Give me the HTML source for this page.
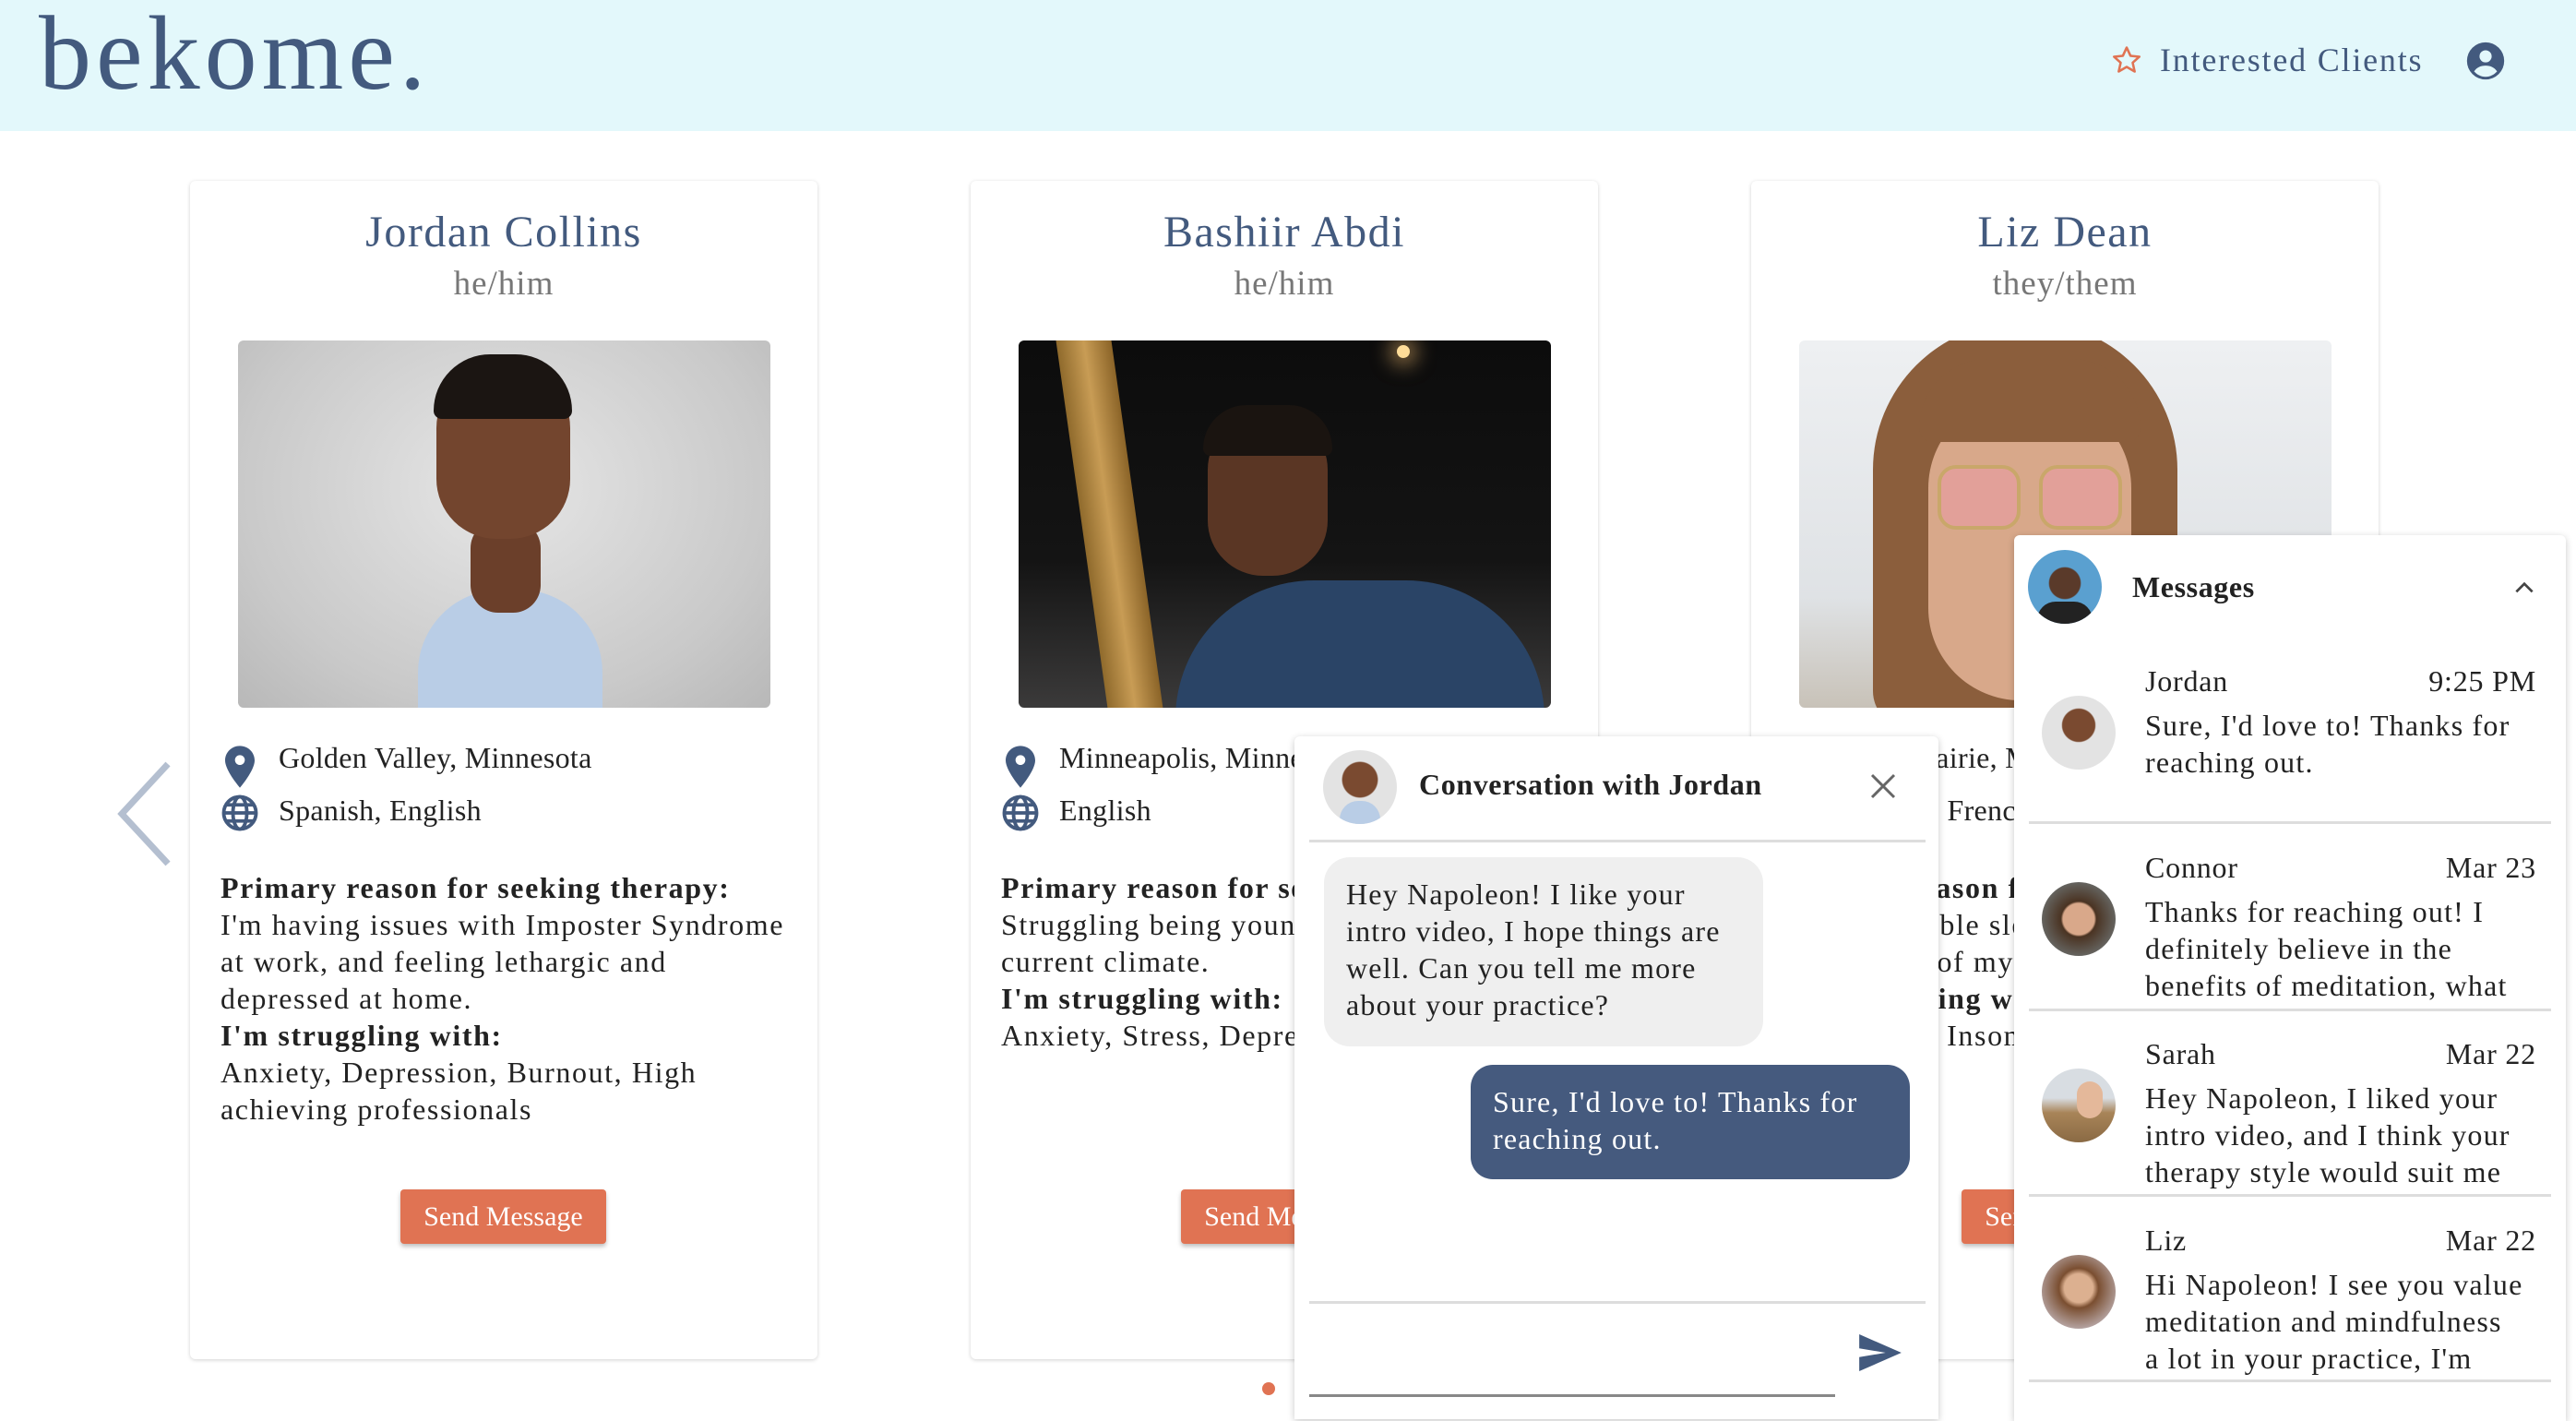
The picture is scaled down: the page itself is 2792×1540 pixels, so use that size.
<!DOCTYPE html>
<html><head><meta charset="utf-8"><style>
*{margin:0;padding:0;box-sizing:border-box}
body{width:2792px;height:1520px;overflow:hidden;background:#fff;font-family:"Liberation Serif",serif;color:#222;position:relative}
.abs{position:absolute}
.hdr{left:0;top:0;width:2792px;height:142px;background:#e3f8fb}
.logo{left:42px;top:-8px;font-size:114px;color:#435a7e;letter-spacing:5px}
.card{width:680px;height:1277px;top:196px;background:#fff;border-radius:6px;box-shadow:0 1px 4px rgba(0,0,0,.18)}
.name{width:100%;text-align:center;top:28px;font-size:48px;letter-spacing:1.5px;color:#435a7e}
.pro{width:100%;text-align:center;top:90px;font-size:37px;letter-spacing:1px;color:#777}
.photo{left:52px;top:173px;width:577px;height:398px;border-radius:6px;overflow:hidden}
.row{left:96px;font-size:32px;color:#222;white-space:nowrap;letter-spacing:.3px}
.txt{left:33px;top:746px;font-size:32px;line-height:40px;white-space:nowrap;letter-spacing:1.6px}
.btn{top:1093px;width:223px;height:59px;background:#e07353;color:#fff;font-size:30px;text-align:center;line-height:59px;border-radius:4px;box-shadow:0 3px 5px rgba(0,0,0,.25)}
.panel{background:#fff;box-shadow:0 2px 8px rgba(0,0,0,.22);border-radius:6px 6px 0 0}
.av{border-radius:50%;overflow:hidden}
.item .nm{font-size:32px;color:#222;letter-spacing:.8px}
.item .msg{font-size:32px;line-height:40px;color:#222;height:88px;overflow:hidden;letter-spacing:1.2px;white-space:nowrap}
.div{height:3px;background:#ddd}
</style></head><body>
<div class="abs hdr"></div>
<div class="abs logo">bekome.</div>
<svg class="abs" style="left:2288px;top:48px" width="34" height="34" viewBox="0 0 24 24"><path d="M12 2.5l2.9 6.3 6.8.7-5.1 4.6 1.5 6.7L12 17.3l-6.1 3.5 1.5-6.7L2.3 9.5l6.8-.7z" fill="none" stroke="#e07353" stroke-width="1.8" stroke-linejoin="round"/></svg>
<div class="abs" style="left:2341px;top:44px;font-size:36px;color:#435a7e;letter-spacing:1.8px">Interested Clients</div>
<svg class="abs" style="left:2672px;top:44px" width="44" height="44" viewBox="0 0 24 24"><circle cx="12" cy="12" r="11" fill="#435a7e"/><circle cx="12" cy="9.3" r="3.6" fill="#e3f8fb"/><path d="M5.2 18.2c1.6-2.4 4-3.4 6.8-3.4s5.2 1 6.8 3.4c-1.8 2-4.2 3.2-6.8 3.2s-5-1.2-6.8-3.2z" fill="#e3f8fb"/></svg>

<svg class="abs" style="left:122px;top:822px" width="70" height="120" viewBox="0 0 70 120"><path d="M60 6L10 60l50 54" fill="none" stroke="#b4bfd0" stroke-width="7"/></svg>

<!-- card 1 -->
<div class="abs card" style="left:206px">
 <div class="abs name">Jordan Collins</div>
 <div class="abs pro">he/him</div>
 <div class="abs photo" style="background:radial-gradient(ellipse at 50% 40%,#e6e6e6,#c9c9c9 70%,#b8b8b8)">
  <div class="abs" style="left:195px;top:270px;width:200px;height:160px;border-radius:90px 90px 0 0;background:#b9cde6"></div>
  <div class="abs" style="left:252px;top:195px;width:76px;height:100px;background:#6b3f2a;border-radius:30px"></div>
  <div class="abs" style="left:215px;top:25px;width:145px;height:190px;border-radius:70px 70px 65px 65px;background:#73452e"></div>
  <div class="abs" style="left:212px;top:15px;width:150px;height:70px;border-radius:70px 70px 10px 10px;background:#1b1512"></div>
 </div>
 <svg class="abs" style="left:38px;top:612px" width="32" height="46" viewBox="0 0 24 34"><path d="M12 0C5.4 0 0 5.2 0 11.8 0 20 12 34 12 34s12-14 12-22.2C24 5.2 18.6 0 12 0zm0 15.5a4 4 0 110-8 4 4 0 010 8z" fill="#435a7e"/></svg>
 <div class="abs row" style="top:607px">Golden Valley, Minnesota</div>
 <svg class="abs" style="left:33px;top:664px" width="42" height="42" viewBox="0 0 24 24"><circle cx="12" cy="12" r="10" fill="none" stroke="#435a7e" stroke-width="2.2"/><ellipse cx="12" cy="12" rx="4.3" ry="10" fill="none" stroke="#435a7e" stroke-width="2.2"/><path d="M2 12h20M3.5 7h17M3.5 17h17" stroke="#435a7e" stroke-width="2.2"/></svg>
 <div class="abs row" style="top:664px">Spanish, English</div>
 <div class="abs txt"><b>Primary reason for seeking therapy:</b><br>I'm having issues with Imposter Syndrome<br>at work, and feeling lethargic and<br>depressed at home.<br><b>I'm struggling with:</b><br>Anxiety, Depression, Burnout, High<br>achieving professionals</div>
 <div class="abs btn" style="left:228px">Send Message</div>
</div>

<!-- card 2 -->
<div class="abs card" style="left:1052px">
 <div class="abs name">Bashiir Abdi</div>
 <div class="abs pro">he/him</div>
 <div class="abs photo" style="background:linear-gradient(180deg,#0c0c0c,#141414 60%,#3b3a3a)">
  <div class="abs" style="left:70px;top:0;width:60px;height:420px;background:linear-gradient(90deg,#8f6a2c,#c89c55,#8b6428);transform:skewX(8deg)"></div>
  <div class="abs" style="left:410px;top:5px;width:14px;height:14px;border-radius:50%;background:#ffdd99;box-shadow:0 0 20px 8px rgba(255,200,120,.5)"></div>
  <div class="abs" style="left:170px;top:260px;width:400px;height:200px;border-radius:150px 150px 0 0;background:#2a4466"></div>
  <div class="abs" style="left:205px;top:80px;width:130px;height:175px;border-radius:60px;background:#5a3624"></div>
  <div class="abs" style="left:200px;top:70px;width:140px;height:55px;border-radius:60px 60px 10px 10px;background:#1a1410"></div>
 </div>
 <svg class="abs" style="left:38px;top:612px" width="32" height="46" viewBox="0 0 24 34"><path d="M12 0C5.4 0 0 5.2 0 11.8 0 20 12 34 12 34s12-14 12-22.2C24 5.2 18.6 0 12 0zm0 15.5a4 4 0 110-8 4 4 0 010 8z" fill="#435a7e"/></svg>
 <div class="abs row" style="top:607px">Minneapolis, Minnesota</div>
 <svg class="abs" style="left:33px;top:664px" width="42" height="42" viewBox="0 0 24 24"><circle cx="12" cy="12" r="10" fill="none" stroke="#435a7e" stroke-width="2.2"/><ellipse cx="12" cy="12" rx="4.3" ry="10" fill="none" stroke="#435a7e" stroke-width="2.2"/><path d="M2 12h20M3.5 7h17M3.5 17h17" stroke="#435a7e" stroke-width="2.2"/></svg>
 <div class="abs row" style="top:664px">English</div>
 <div class="abs txt"><b>Primary reason for seeking therapy:</b><br>Struggling being young in the<br>current climate.<br><b>I'm struggling with:</b><br>Anxiety, Stress, Depression</div>
 <div class="abs btn" style="left:228px">Send Message</div>
</div>

<!-- card 3 -->
<div class="abs card" style="left:1898px">
 <div class="abs name">Liz Dean</div>
 <div class="abs pro">they/them</div>
 <div class="abs photo" style="background:linear-gradient(180deg,#eef0f2,#dfe2e5 70%,#c8c2b8)">
  <div class="abs" style="left:80px;top:-20px;width:330px;height:440px;border-radius:160px 160px 40px 40px;background:#8b5e3c"></div>
  <div class="abs" style="left:140px;top:60px;width:220px;height:330px;border-radius:100px;background:#d8a88a"></div>
  <div class="abs" style="left:130px;top:20px;width:240px;height:90px;border-radius:100px 100px 20px 20px;background:#8b5e3c"></div>
  <div class="abs" style="left:150px;top:135px;width:90px;height:70px;border-radius:20px;border:4px solid #c9a76a;background:rgba(240,150,170,.45)"></div>
  <div class="abs" style="left:260px;top:135px;width:90px;height:70px;border-radius:20px;border:4px solid #c9a76a;background:rgba(240,150,170,.45)"></div>
 </div>
 <div class="abs row" style="top:607px">Eden Prairie, Minnesota</div>
 <div class="abs row" style="top:664px">English, French</div>
 <div class="abs txt"><b>Primary reason for seeking therapy:</b><br>Having trouble sleeping and<br>taking care of myself.<br><b>I'm struggling with:</b><br>Depression, Insomnia</div>
 <div class="abs btn" style="left:228px">Send Message</div>
</div>

<div class="abs" style="left:1368px;top:1498px;width:14px;height:14px;border-radius:50%;background:#e07353"></div>

<!-- conversation panel -->
<div class="abs panel" style="left:1403px;top:798px;width:698px;height:740px">
 <div class="abs av" style="left:31px;top:15px;width:80px;height:80px;background:radial-gradient(circle at 50% 40%,#7a4a30 30%,#e3e3e3 32%)"><div class="abs" style="left:18px;top:55px;width:44px;height:30px;border-radius:20px 20px 0 0;background:#b9cde6"></div></div>
 <div class="abs" style="left:135px;top:34px;font-size:32px;font-weight:bold;color:#222;letter-spacing:.6px">Conversation with Jordan</div>
 <svg class="abs" style="left:622px;top:38px" width="32" height="32" viewBox="0 0 24 24"><path d="M3 3l18 18M21 3L3 21" stroke="#666" stroke-width="2.2"/></svg>
 <div class="abs div" style="left:16px;top:112px;width:668px"></div>
 <div class="abs" style="left:32px;top:131px;width:476px;height:205px;background:#efefef;border-radius:28px;padding:20px 24px;font-size:32px;line-height:40px;letter-spacing:1.2px;white-space:nowrap">Hey Napoleon! I like your<br>intro video, I hope things are<br>well. Can you tell me more<br>about your practice?</div>
 <div class="abs" style="left:191px;top:356px;width:476px;height:124px;background:#455a7e;color:#fff;border-radius:24px;padding:20px 24px;font-size:32px;line-height:40px;letter-spacing:1.2px;white-space:nowrap">Sure, I'd love to! Thanks for<br>reaching out.</div>
 <div class="abs div" style="left:16px;top:612px;width:668px"></div>
 <svg class="abs" style="left:612px;top:648px" width="46" height="40" viewBox="0 0 24 21"><path d="M0 0l24 10.5L0 21l0-8 15-2.5L0 8z" fill="#435a7e"/></svg>
 <div class="abs" style="left:16px;top:713px;width:570px;height:3px;background:#888"></div>
</div>

<!-- messages panel -->
<div class="abs panel" style="left:2183px;top:580px;width:598px;height:960px">
 <div class="abs av" style="left:15px;top:16px;width:80px;height:80px;background:radial-gradient(circle at 50% 45%,#5a3a2a 28%,#5aa0d0 30%)"><div class="abs" style="left:10px;top:56px;width:60px;height:30px;border-radius:20px 20px 0 0;background:#222"></div></div>
 <div class="abs" style="left:128px;top:38px;font-size:32px;font-weight:bold;letter-spacing:.6px">Messages</div>
 <svg class="abs" style="left:540px;top:44px" width="26" height="26" viewBox="0 0 24 24"><path d="M4 16l8-8 8 8" fill="none" stroke="#444" stroke-width="2.5"/></svg>

 <div class="abs item" style="left:0;top:140px;width:598px">
  <div class="abs av" style="left:30px;top:34px;width:80px;height:80px;background:radial-gradient(circle at 50% 40%,#7a4a30 28%,#e3e3e3 30%)"></div>
  <div class="abs nm" style="left:142px;top:0">Jordan</div><div class="abs nm" style="right:32px;top:0">9:25 PM</div>
  <div class="abs msg" style="left:142px;top:46px;width:440px">Sure, I'd love to! Thanks for<br>reaching out.</div>
 </div>
 <div class="abs div" style="left:16px;top:310px;width:566px"></div>

 <div class="abs item" style="left:0;top:342px;width:598px">
  <div class="abs av" style="left:30px;top:34px;width:80px;height:80px;background:radial-gradient(circle at 50% 50%,#d9a88a 30%,#4a3322 34%,#7a8a90)"></div>
  <div class="abs nm" style="left:142px;top:0">Connor</div><div class="abs nm" style="right:32px;top:0">Mar 23</div>
  <div class="abs msg" style="left:142px;top:46px;width:440px;height:124px">Thanks for reaching out! I<br>definitely believe in the<br>benefits of meditation, what</div>
 </div>
 <div class="abs div" style="left:16px;top:513px;width:566px"></div>

 <div class="abs item" style="left:0;top:544px;width:598px">
  <div class="abs av" style="left:30px;top:34px;width:80px;height:80px;background:linear-gradient(180deg,#d8dde2 40%,#a88458 60%,#8a6a44)"><div class="abs" style="left:38px;top:14px;width:28px;height:40px;border-radius:14px;background:#e4b89a"></div></div>
  <div class="abs nm" style="left:142px;top:0">Sarah</div><div class="abs nm" style="right:32px;top:0">Mar 22</div>
  <div class="abs msg" style="left:142px;top:46px;width:440px;height:124px">Hey Napoleon, I liked your<br>intro video, and I think your<br>therapy style would suit me</div>
 </div>
 <div class="abs div" style="left:16px;top:714px;width:566px"></div>

 <div class="abs item" style="left:0;top:746px;width:598px">
  <div class="abs av" style="left:30px;top:34px;width:80px;height:80px;background:radial-gradient(circle at 50% 45%,#dcb090 26%,#7a4e30 36%,#dde)"></div>
  <div class="abs nm" style="left:142px;top:0">Liz</div><div class="abs nm" style="right:32px;top:0">Mar 22</div>
  <div class="abs msg" style="left:142px;top:46px;width:440px;height:124px">Hi Napoleon! I see you value<br>meditation and mindfulness<br>a lot in your practice, I'm</div>
 </div>
 <div class="abs div" style="left:16px;top:915px;width:566px"></div>
</div>
</body></html>
